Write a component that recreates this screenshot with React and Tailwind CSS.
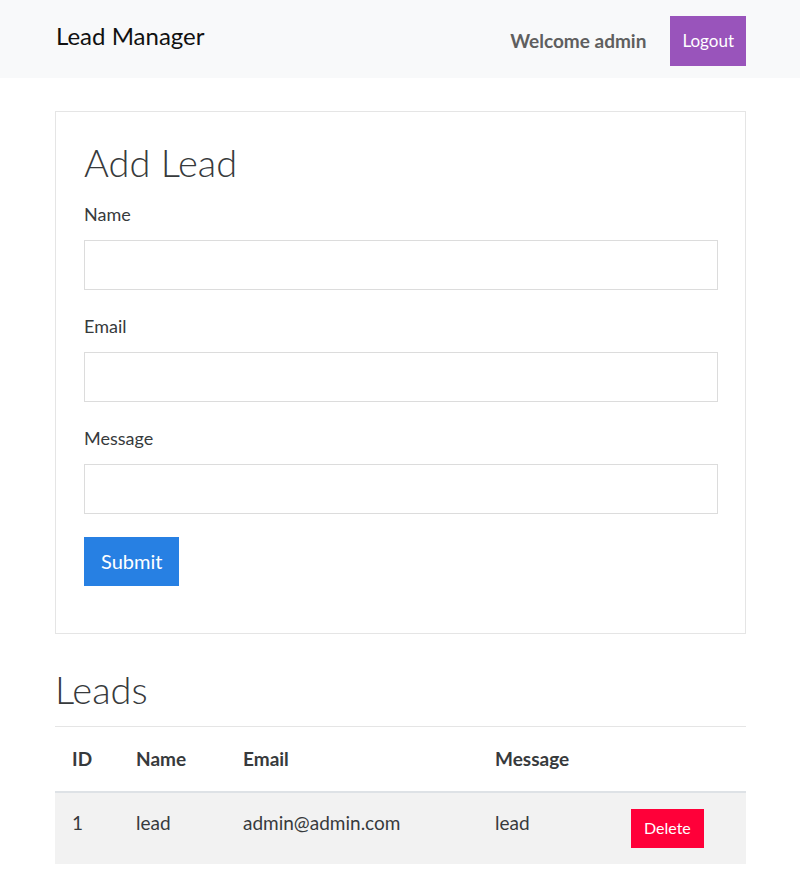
export default function App() {
  const leads = [{ id: 1, name: 'lead', email: 'admin@admin.com', message: 'lead' }]

  return (
    <div className="min-h-[877px] bg-white text-[#373a3c] font-['Lato','Open_Sans',sans-serif]">
      {/* Navbar */}
      <nav className="h-[78px] bg-[#f8f9fa] flex items-center justify-between pl-[56px] pr-[54px]">
        <span className="text-[24px] text-[#111] leading-none -mt-[7px]">Lead Manager</span>
        <div className="flex items-center gap-[24px] mt-[4px]">
          <span className="text-[19px] font-bold text-[#5f5f5f]">Welcome admin</span>
          <button className="h-[50px] px-[12px] bg-[#9954bb] text-white text-[17px]">Logout</button>
        </div>
      </nav>

      <div className="pl-[55px] pr-[54px] pt-[33px]">
        {/* Add Lead card */}
        <div className="border border-[#e5e5e5] pl-[28px] pr-[27px] pt-[28px] pb-[47px]">
          <h2 className="text-[38px] font-light leading-[1.2] mb-[15px]">Add Lead</h2>
          {['Name', 'Email', 'Message'].map(label => (
            <div key={label} className="mb-[23px]">
              <label className="block text-[18px] leading-[1.5] mb-[12px]">{label}</label>
              <input type="text" className="w-full h-[50px] border border-[#dcdcdc] bg-white px-3 outline-none" />
            </div>
          ))}
          <button className="h-[49px] px-[17px] bg-[#2780e3] text-white text-[20px]">Submit</button>
        </div>

        {/* Leads table */}
        <h2 className="text-[38px] font-light leading-[1.2] mt-[33px] mb-[14px]">Leads</h2>
        <table className="w-full text-left border-collapse">
          <thead>
            <tr className="border-t border-[#e5e5e5] border-b-2 border-b-[#dee2e6]">
              <th className="h-[65px] pl-[17px] w-[81px] text-[19px] font-bold">ID</th>
              <th className="w-[107px] text-[19px] font-bold">Name</th>
              <th className="w-[252px] text-[19px] font-bold">Email</th>
              <th className="w-[135px] text-[19px] font-bold">Message</th>
              <th></th>
            </tr>
          </thead>
          <tbody>
            {leads.map(l => (
              <tr key={l.id} className="bg-[#f2f2f2]">
                <td className="h-[72px] pl-[17px] text-[19px] pb-[10px]">{l.id}</td>
                <td className="text-[19px] pb-[10px]">{l.name}</td>
                <td className="text-[19px] pb-[10px]">{l.email}</td>
                <td className="text-[19px] pb-[10px]">{l.message}</td>
                <td>
                  <button className="h-[39px] px-[13px] bg-[#ff0039] text-white text-[16px] ml-[1px]">Delete</button>
                </td>
              </tr>
            ))}
          </tbody>
        </table>
      </div>
    </div>
  )
}
